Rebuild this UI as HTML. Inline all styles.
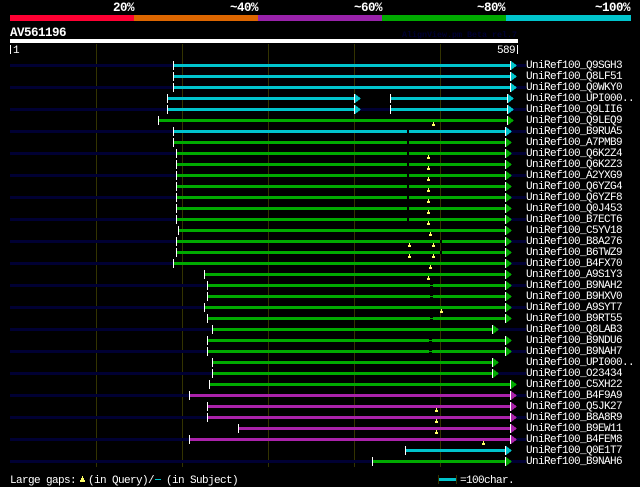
<!DOCTYPE html>
<html><head><meta charset="utf-8"><title>AlignView</title>
<style>
html,body{margin:0;padding:0;background:#000;width:640px;height:487px;overflow:hidden}
svg{display:block}
text{font-family:"Liberation Mono",monospace;fill:#fff;font-size:11px;letter-spacing:-0.6px;white-space:pre}
.b{font-weight:bold;font-size:12.5px;letter-spacing:-0.5px}
</style></head><body>
<svg width="640" height="487" viewBox="0 0 640 487" shape-rendering="crispEdges">
<rect width="640" height="487" fill="#000"/>
<!-- top scale -->
<rect x="10" y="15" width="124" height="6" fill="#ff0033"/>
<rect x="134" y="15" width="124" height="6" fill="#dd6600"/>
<rect x="258" y="15" width="124" height="6" fill="#9922aa"/>
<rect x="382" y="15" width="124" height="6" fill="#00aa00"/>
<rect x="506" y="15" width="125" height="6" fill="#00c4cc"/>
<text class="b" x="113" y="11">20%</text>
<text class="b" x="230" y="11">~40%</text>
<text class="b" x="354" y="11">~60%</text>
<text class="b" x="477" y="11">~80%</text>
<text class="b" x="595" y="11">~100%</text>
<text class="b" x="10" y="36">AV561196</text>
<text x="402" y="37" style="font-size:8.33px;letter-spacing:0;font-weight:bold;fill:#000033">AlignView.pm Beta rel.7</text>
<rect x="10" y="39" width="508" height="4" fill="#fff"/>
<rect x="10" y="45" width="1" height="9" fill="#fff"/>
<text x="13" y="53">1</text>
<text x="497" y="53">589</text>
<rect x="517" y="45" width="1" height="9" fill="#fff"/>
<!-- grid -->
<path fill="#333300" d="M96 44h1v423h-1zM182 44h1v423h-1zM268 44h1v423h-1zM354 44h1v423h-1zM440 44h1v423h-1z"/>
<!-- dark query lines -->
<path fill="#000033" d="M10 64H526v3H10zM10 86H526v3H10zM10 108H526v3H10zM10 130H526v3H10zM10 152H526v3H10zM10 174H526v3H10zM10 196H526v3H10zM10 218H526v3H10zM10 240H526v3H10zM10 262H526v3H10zM10 284H526v3H10zM10 306H526v3H10zM10 328H526v3H10zM10 350H526v3H10zM10 372H526v3H10zM10 394H526v3H10zM10 416H526v3H10zM10 438H526v3H10zM10 460H526v3H10z"/>
<!-- cyan -->
<path fill="#00c4cc" d="M174 64H510v3H174zM511 61v9l6-4.5zM174 75H510v3H174zM511 72v9l6-4.5zM174 86H510v3H174zM511 83v9l6-4.5zM168 97H354v3H168zM355 94v9l6-4.5zM391 97H507v3H391zM508 94v9l6-4.5zM168 108H354v3H168zM355 105v9l6-4.5zM391 108H507v3H391zM508 105v9l6-4.5zM174 130H505v3H174zM506 127v9l6-4.5zM406 449H505v3H406zM506 446v9l6-4.5z"/>
<!-- green -->
<path fill="#00aa00" d="M159 119H507v3H159zM508 116v9l6-4.5zM174 141H505v3H174zM506 138v9l6-4.5zM177 152H505v3H177zM506 149v9l6-4.5zM177 163H505v3H177zM506 160v9l6-4.5zM177 174H505v3H177zM506 171v9l6-4.5zM177 185H505v3H177zM506 182v9l6-4.5zM177 196H505v3H177zM506 193v9l6-4.5zM177 207H505v3H177zM506 204v9l6-4.5zM177 218H505v3H177zM506 215v9l6-4.5zM179 229H505v3H179zM506 226v9l6-4.5zM177 240H505v3H177zM506 237v9l6-4.5zM177 251H505v3H177zM506 248v9l6-4.5zM174 262H505v3H174zM506 259v9l6-4.5zM205 273H505v3H205zM506 270v9l6-4.5zM208 284H505v3H208zM506 281v9l6-4.5zM208 295H505v3H208zM506 292v9l6-4.5zM205 306H505v3H205zM506 303v9l6-4.5zM208 317H505v3H208zM506 314v9l6-4.5zM213 328H492v3H213zM493 325v9l6-4.5zM208 339H505v3H208zM506 336v9l6-4.5zM208 350H505v3H208zM506 347v9l6-4.5zM213 361H492v3H213zM493 358v9l6-4.5zM213 372H492v3H213zM493 369v9l6-4.5zM210 383H510v3H210zM511 380v9l6-4.5zM373 460H505v3H373zM506 457v9l6-4.5z"/>
<!-- purple -->
<path fill="#aa22aa" d="M190 394H510v3H190zM511 391v9l6-4.5zM208 405H510v3H208zM511 402v9l6-4.5zM208 416H510v3H208zM511 413v9l6-4.5zM239 427H510v3H239zM511 424v9l6-4.5zM190 438H510v3H190zM511 435v9l6-4.5z"/>
<!-- subject gaps -->
<path fill="#000" d="M407 130h2v3h-2zM407 141h2v3h-2zM407 152h2v3h-2zM407 163h2v3h-2zM407 174h2v3h-2zM407 185h2v3h-2zM407 196h2v3h-2zM407 207h2v3h-2zM407 218h2v3h-2zM440 240h2v3h-2zM440 251h2v3h-2zM430 284h3v1h-3zM430 286h3v1h-3zM430 295h3v1h-3zM430 297h3v1h-3zM430 317h3v1h-3zM430 319h3v1h-3zM429 339h3v1h-3zM429 341h3v1h-3zM429 350h3v1h-3zM429 352h3v1h-3z"/>
<!-- white ticks -->
<path fill="#fff" d="M173 61h1v9h-1zM510 61h1v9h-1zM173 72h1v9h-1zM510 72h1v9h-1zM173 83h1v9h-1zM510 83h1v9h-1zM167 94h1v9h-1zM354 94h1v9h-1zM390 94h1v9h-1zM507 94h1v9h-1zM167 105h1v9h-1zM354 105h1v9h-1zM390 105h1v9h-1zM507 105h1v9h-1zM158 116h1v9h-1zM507 116h1v9h-1zM173 127h1v9h-1zM505 127h1v9h-1zM173 138h1v9h-1zM505 138h1v9h-1zM176 149h1v9h-1zM505 149h1v9h-1zM176 160h1v9h-1zM505 160h1v9h-1zM176 171h1v9h-1zM505 171h1v9h-1zM176 182h1v9h-1zM505 182h1v9h-1zM176 193h1v9h-1zM505 193h1v9h-1zM176 204h1v9h-1zM505 204h1v9h-1zM176 215h1v9h-1zM505 215h1v9h-1zM178 226h1v9h-1zM505 226h1v9h-1zM176 237h1v9h-1zM505 237h1v9h-1zM176 248h1v9h-1zM505 248h1v9h-1zM173 259h1v9h-1zM505 259h1v9h-1zM204 270h1v9h-1zM505 270h1v9h-1zM207 281h1v9h-1zM505 281h1v9h-1zM207 292h1v9h-1zM505 292h1v9h-1zM204 303h1v9h-1zM505 303h1v9h-1zM207 314h1v9h-1zM505 314h1v9h-1zM212 325h1v9h-1zM492 325h1v9h-1zM207 336h1v9h-1zM505 336h1v9h-1zM207 347h1v9h-1zM505 347h1v9h-1zM212 358h1v9h-1zM492 358h1v9h-1zM212 369h1v9h-1zM492 369h1v9h-1zM209 380h1v9h-1zM510 380h1v9h-1zM189 391h1v9h-1zM510 391h1v9h-1zM207 402h1v9h-1zM510 402h1v9h-1zM207 413h1v9h-1zM510 413h1v9h-1zM238 424h1v9h-1zM510 424h1v9h-1zM189 435h1v9h-1zM510 435h1v9h-1zM405 446h1v9h-1zM505 446h1v9h-1zM372 457h1v9h-1zM505 457h1v9h-1z"/>
<!-- query gap markers -->
<path fill="#ffff66" d="M433 122h1v2h-1zM432 124h3v2h-3zM428 155h1v2h-1zM427 157h3v2h-3zM428 166h1v2h-1zM427 168h3v2h-3zM428 177h1v2h-1zM427 179h3v2h-3zM428 188h1v2h-1zM427 190h3v2h-3zM428 199h1v2h-1zM427 201h3v2h-3zM428 210h1v2h-1zM427 212h3v2h-3zM428 221h1v2h-1zM427 223h3v2h-3zM430 232h1v2h-1zM429 234h3v2h-3zM409 243h1v2h-1zM408 245h3v2h-3zM433 243h1v2h-1zM432 245h3v2h-3zM409 254h1v2h-1zM408 256h3v2h-3zM433 254h1v2h-1zM432 256h3v2h-3zM430 265h1v2h-1zM429 267h3v2h-3zM428 276h1v2h-1zM427 278h3v2h-3zM441 309h1v2h-1zM440 311h3v2h-3zM436 408h1v2h-1zM435 410h3v2h-3zM436 419h1v2h-1zM435 421h3v2h-3zM436 430h1v2h-1zM435 432h3v2h-3zM483 441h1v2h-1zM482 443h3v2h-3z"/>
<!-- labels -->
<text x="526" y="68">UniRef100_Q9SGH3</text>
<text x="526" y="79">UniRef100_Q8LF51</text>
<text x="526" y="90">UniRef100_Q0WKY0</text>
<text x="526" y="101">UniRef100_UPI000..</text>
<text x="526" y="112">UniRef100_Q9LII6</text>
<text x="526" y="123">UniRef100_Q9LEQ9</text>
<text x="526" y="134">UniRef100_B9RUA5</text>
<text x="526" y="145">UniRef100_A7PMB9</text>
<text x="526" y="156">UniRef100_Q6K2Z4</text>
<text x="526" y="167">UniRef100_Q6K2Z3</text>
<text x="526" y="178">UniRef100_A2YXG9</text>
<text x="526" y="189">UniRef100_Q6YZG4</text>
<text x="526" y="200">UniRef100_Q6YZF8</text>
<text x="526" y="211">UniRef100_Q0J453</text>
<text x="526" y="222">UniRef100_B7ECT6</text>
<text x="526" y="233">UniRef100_C5YV18</text>
<text x="526" y="244">UniRef100_B8A276</text>
<text x="526" y="255">UniRef100_B6TWZ9</text>
<text x="526" y="266">UniRef100_B4FX70</text>
<text x="526" y="277">UniRef100_A9S1Y3</text>
<text x="526" y="288">UniRef100_B9NAH2</text>
<text x="526" y="299">UniRef100_B9HXV0</text>
<text x="526" y="310">UniRef100_A9SYT7</text>
<text x="526" y="321">UniRef100_B9RT55</text>
<text x="526" y="332">UniRef100_Q8LAB3</text>
<text x="526" y="343">UniRef100_B9NDU6</text>
<text x="526" y="354">UniRef100_B9NAH7</text>
<text x="526" y="365">UniRef100_UPI000..</text>
<text x="526" y="376">UniRef100_O23434</text>
<text x="526" y="387">UniRef100_C5XH22</text>
<text x="526" y="398">UniRef100_B4F9A9</text>
<text x="526" y="409">UniRef100_Q5JK27</text>
<text x="526" y="420">UniRef100_B8A8R9</text>
<text x="526" y="431">UniRef100_B9EW11</text>
<text x="526" y="442">UniRef100_B4FEM8</text>
<text x="526" y="453">UniRef100_Q0E1T7</text>
<text x="526" y="464">UniRef100_B9NAH6</text>
<!-- legend -->
<text x="10" y="483">Large gaps:</text>
<path fill="#ffff66" d="M82 476h1v2h-1zM81 478h3v2h-3zM80 480h5v2h-5z"/>
<text x="88" y="483">(in Query)/</text>
<rect x="155" y="479" width="6" height="1" fill="#00c4cc"/>
<text x="166" y="483">(in Subject)</text>
<path fill="#333300" d="M438 475h1v9h-1zM456 475h1v9h-1z"/>
<rect x="439" y="478" width="17" height="3" fill="#00c4cc"/>
<text x="460" y="483">=100char.</text>
</svg>
</body></html>
